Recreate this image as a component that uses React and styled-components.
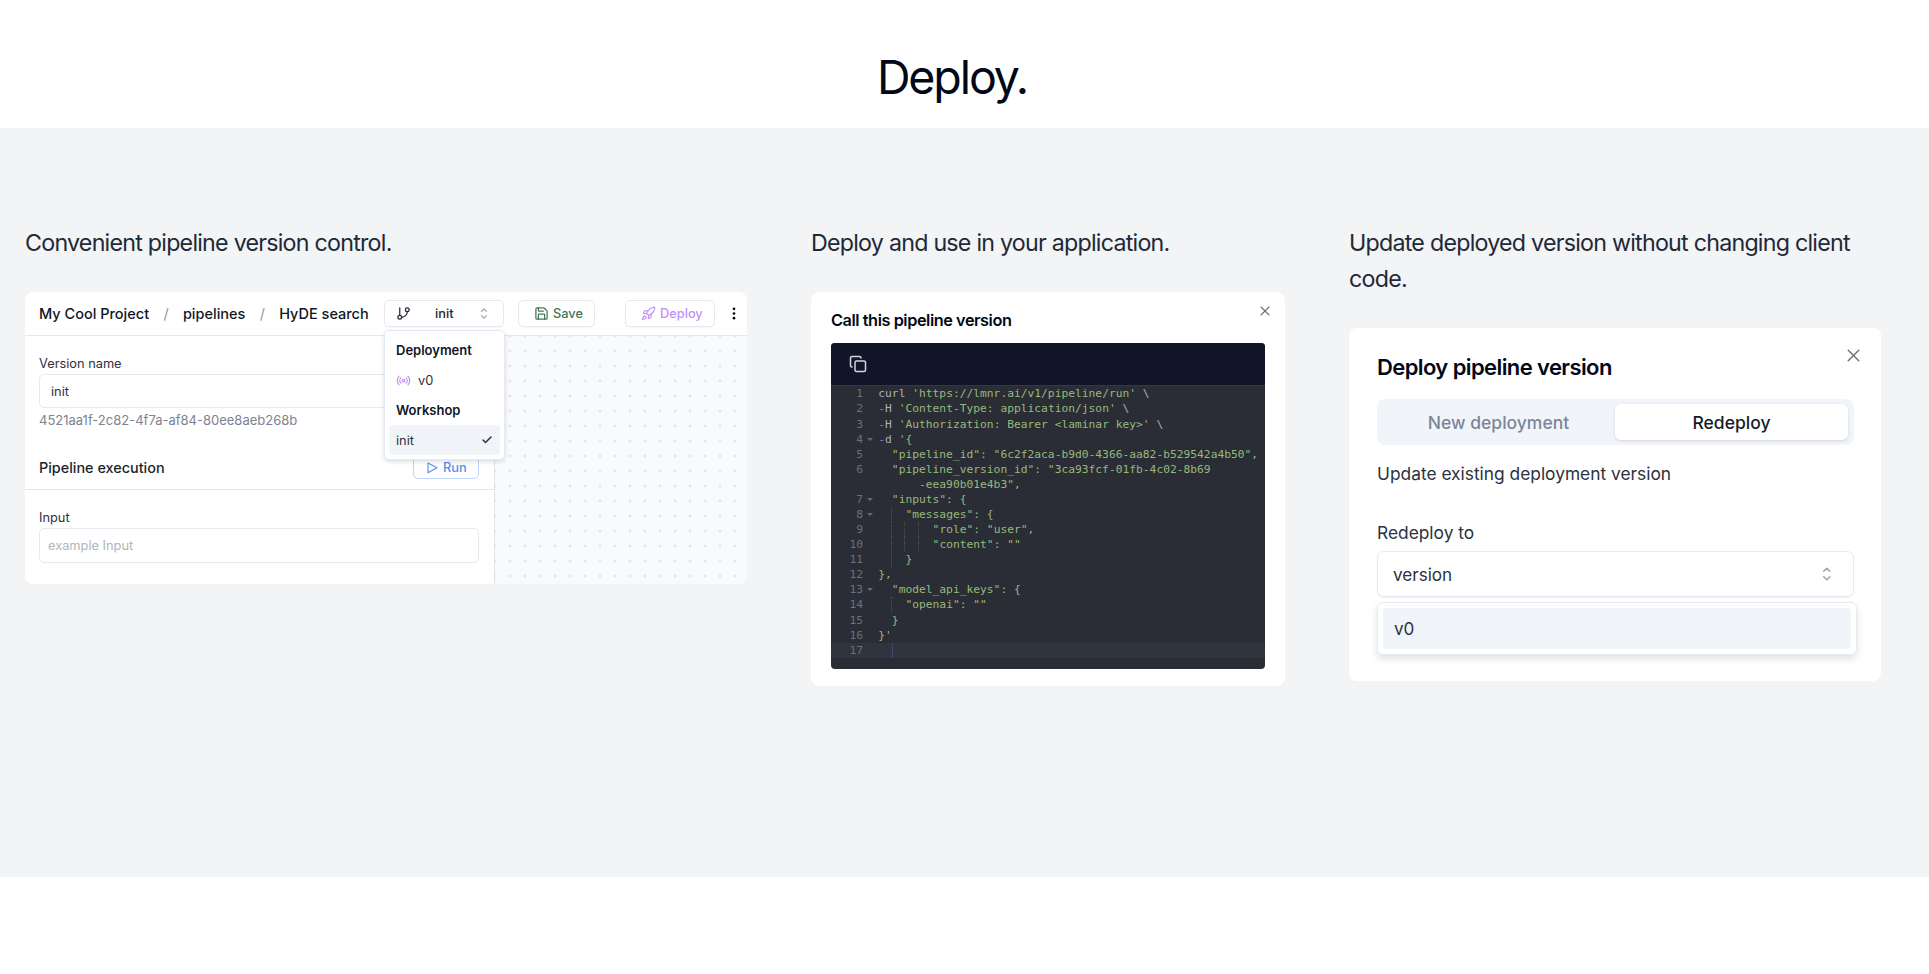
import React from "react";
import styled, { createGlobalStyle } from "styled-components";
import { GitBranch, Save, Rocket, Radio, Copy, Check, X } from "lucide-react";

const colors = {
  text: "#020817",
  heading: "#1f2937",
  body: "#2b3240",
  muted: "#7d8390",
  placeholder: "#b0b5be",
  border: "#e5e9f0",
  line: "#e4e6ea",
  section: "#f2f4f6",
  accent: "#f1f5f9",
  green: "#447556",
  purple: "#c58ffb",
  blue: "#5b8bf0",
  codeHeader: "#101628",
  code: "#2a2d35",
  codeActive: "#2f343d",
  codeString: "#98b97b",
  codeText: "#a9b0bc",
  codeDash: "#b06cc2",
  gutter: "#6a707c",
};

const GlobalStyle = createGlobalStyle`
* { box-sizing: border-box; }
body {
  margin: 0;
  background: #fff;
  color: ${colors.text};
  font-family: Inter, "Liberation Sans", sans-serif;
}
svg { display: block; flex-shrink: 0; }
`;

const CaretSort = ({ size = 15 }) => (
  <svg width={size * 0.6} height={size} viewBox="0 0 9 15" fill="none" stroke="#9a9ea6" strokeWidth="1.3" strokeLinecap="round" strokeLinejoin="round">
    <path d="M1.6 5 4.5 2.1 7.4 5M1.6 10 4.5 12.9 7.4 10" />
  </svg>
);

const PlayIcon = () => (
  <svg width="11" height="12" viewBox="0 0 11 12" fill="none" stroke="currentColor" strokeWidth="1.1" strokeLinejoin="round">
    <path d="M1 1 10 5.8 1 10.8Z" />
  </svg>
);

const DotsIcon = () => (
  <svg width="4" height="13" viewBox="0 0 4 13" fill={colors.text}>
    <circle cx="2" cy="1.8" r="1.35" />
    <circle cx="2" cy="6.5" r="1.35" />
    <circle cx="2" cy="11.2" r="1.35" />
  </svg>
);

const PageHeader = styled.header`
height:128px;
width:1904px;
padding-top:53px;
`;
const PageTitle = styled.h1`
margin:0;
text-align:center;
font-size:46.5px;
font-weight:400;
line-height:48px;
letter-spacing:-2.1px;
`;
const Section = styled.section`
display:grid;
grid-template-columns:722px 474px 532px;
column-gap:64px;
align-items:start;
height:749px;
padding:97px 0 0 25px;
background:${colors.section};
`;
const Caption = styled.p`
margin:0 0 31px;
font-size:23.25px;
line-height:36px;
letter-spacing:-0.77px;
color:${colors.heading};
`;
const Card = styled.div`
display:flex;
flex-direction:column;
height:${(props) => props.$height}px;
padding:${(props) => props.$padding || "0"};
border-radius:8px;
background:#fff;
`;

/* version control card */
const Toolbar = styled.div`
display:flex;
align-items:center;
height:44px;
padding-left:14px;
border-bottom:1px solid ${colors.line};
`;
const Crumb = styled.span`
margin-right:14.3px;
font-size:14.5px;
font-weight:${(props) => (props.$slash ? 400 : 500)};
color:${(props) => (props.$slash ? "#9298a3" : "#111624")};
`;
const SelectWrapper = styled.div`
position:relative;
margin:0 14px 0 auto;
`;
const ToolButton = styled.div`
display:flex;
align-items:center;
width:${(props) => props.$width}px;
height:27px;
padding-left:${(props) => props.$left}px;
gap:${(props) => props.$gap || 4}px;
border:1px solid ${colors.border};
border-radius:5px;
background:#fff;
box-shadow:0 1px 1px rgba(15,23,42,.03);
font-size:12.8px;
font-weight:500;
color:${(props) => props.$color || "#222733"};
`;
const Actions = styled.div`
display:flex;
align-items:center;
width:229px;
`;
const DeployButton = styled(ToolButton)`
margin-left:30px;
`;
const MoreButton = styled.div`
margin-left:17px;
`;
const Menu = styled.div`
position:absolute;
top:30px;
left:0;
z-index:2;
width:121px;
padding:4px;
border:1px solid ${colors.border};
border-radius:5px;
background:#fff;
box-shadow:0 2px 4px rgba(15,23,42,.14);
`;
const MenuItem = styled.div`
display:flex;
align-items:center;
height:30px;
padding:0 7px 0 7px;
gap:7px;
border-radius:4px;
background:${(props) => (props.$active ? colors.accent : "transparent")};
font-size:${(props) => (props.$label ? 13 : 12.8)}px;
font-weight:${(props) => (props.$label ? 600 : 400)};
color:${(props) => (props.$label ? "#111624" : colors.body)};
`;
const ItemText = styled.span`
flex:${(props) => (props.$grow ? 1 : "none")};
`;
const Workspace = styled.div`
display:flex;
flex:1;
`;
const SidePanel = styled.div`
width:470px;
border-right:1px solid #e0e3e8;
`;
const FieldGroup = styled.div`
padding:${(props) => props.$top}px 15px 0 14px;
`;
const FieldLabel = styled.div`
font-size:12.8px;
line-height:18px;
color:${colors.body};
`;
const FieldInput = styled.div`
display:flex;
align-items:center;
height:${(props) => props.$height}px;
margin-top:${(props) => props.$top}px;
padding-left:${(props) => props.$left}px;
border:1px solid ${colors.border};
border-radius:5px;
font-size:12.8px;
color:${(props) => (props.$placeholder ? colors.placeholder : colors.body)};
`;
const VersionId = styled.div`
margin-top:3px;
font-size:13px;
line-height:18px;
color:${colors.muted};
`;
const ExecutionRow = styled.div`
display:flex;
align-items:center;
justify-content:space-between;
height:44px;
margin-top:17px;
padding:0 15px 0 14px;
border-bottom:1px solid ${colors.line};
font-size:14.4px;
font-weight:500;
color:#1a1f2c;
`;
const RunButton = styled.div`
display:flex;
align-items:center;
width:66px;
height:23px;
padding-left:13px;
gap:5px;
border:1px solid #bdd3fb;
border-radius:5px;
font-size:12.8px;
font-weight:500;
color:${colors.blue};
`;
const Canvas = styled.div`
flex:1;
border-bottom-right-radius:8px;
background-color:#f9fafb;
background-image:radial-gradient(circle at 7.5px 7.5px, #d9dce1 0.9px, transparent 1.4px);
background-size:15px 15px;
background-position:7.5px 7.5px;
`;

const Breadcrumbs = () => (
  <>
    <Crumb>My Cool Project</Crumb>
    <Crumb $slash>/</Crumb>
    <Crumb>pipelines</Crumb>
    <Crumb $slash>/</Crumb>
    <Crumb>HyDE search</Crumb>
  </>
);

const SelectContent = styled.div`
display:flex;
flex:1;
align-items:center;
justify-content:space-between;
padding:0 15px 0 23px;
`;

const VersionSelect = () => (
  <SelectWrapper>
    <ToolButton $width={120} $left={11} $gap={1}>
      <GitBranch size={15} strokeWidth={2} />
      <SelectContent>
        <span>init</span>
        <CaretSort size={13} />
      </SelectContent>
    </ToolButton>
    <Menu>
      <MenuItem $label>Deployment</MenuItem>
      <MenuItem>
        <Radio size={15} color={colors.purple} strokeWidth={2} />
        <ItemText>v0</ItemText>
      </MenuItem>
      <MenuItem $label>Workshop</MenuItem>
      <MenuItem $active>
        <ItemText $grow>init</ItemText>
        <Check size={12} strokeWidth={3} />
      </MenuItem>
    </Menu>
  </SelectWrapper>
);

const VersionControl = () => (
  <Card $height={292}>
    <Toolbar>
      <Breadcrumbs />
      <VersionSelect />
      <Actions>
        <ToolButton $width={77} $left={15} $color={colors.green}>
          <Save size={15} strokeWidth={2} />
          Save
        </ToolButton>
        <DeployButton $width={90} $left={15} $color={colors.purple}>
          <Rocket size={15} strokeWidth={1.9} />
          Deploy
        </DeployButton>
        <MoreButton>
          <DotsIcon />
        </MoreButton>
      </Actions>
    </Toolbar>
    <Workspace>
      <SidePanel>
        <FieldGroup $top={19}>
          <FieldLabel>Version name</FieldLabel>
          <FieldInput $height={34} $top={1} $left={11}>init</FieldInput>
          <VersionId>4521aa1f-2c82-4f7a-af84-80ee8aeb268b</VersionId>
        </FieldGroup>
        <ExecutionRow>
          Pipeline execution
          <RunButton>
            <PlayIcon />
            Run
          </RunButton>
        </ExecutionRow>
        <FieldGroup $top={19}>
          <FieldLabel>Input</FieldLabel>
          <FieldInput $height={35} $top={1} $left={8} $placeholder>example Input</FieldInput>
        </FieldGroup>
      </SidePanel>
      <Canvas />
    </Workspace>
  </Card>
);

/* code card */
const CardHeader = styled.div`
display:flex;
justify-content:space-between;
align-items:flex-start;
`;
const CodeTitle = styled.h2`
margin:0 0 13px;
font-size:16.3px;
font-weight:600;
line-height:20px;
letter-spacing:-0.44px;
`;
const CodeClose = styled.div`
margin:-7px -8px 0 0;
color:#6b7078;
`;
const CodeBox = styled.div`
display:flex;
flex-direction:column;
height:325.5px;
border-radius:4px;
overflow:hidden;
background:${colors.code};
font-family:"DejaVu Sans Mono", "Liberation Mono", monospace;
font-size:11.27px;
`;
const CodeToolbar = styled.div`
display:flex;
align-items:center;
flex-shrink:0;
height:43.4px;
padding-left:18px;
border-bottom:1px solid #343844;
background:${colors.codeHeader};
color:#d3d5da;
`;
const CodeRow = styled.div`
display:flex;
height:15.08px;
line-height:15.08px;
background:${(props) => (props.$active ? colors.codeActive : "transparent")};
white-space:pre;
`;
const LineNumber = styled.span`
width:32px;
text-align:right;
color:${colors.gutter};
`;
const Fold = styled.span`
display:flex;
align-items:center;
justify-content:center;
width:15.3px;
padding-right:2px;
`;
const FoldArrow = styled.i`
border:3px solid transparent;
border-top:3px solid #656a75;
border-bottom:0;
`;
const Guide = styled.span`
border-left:1px dotted #50544f;
margin-left:-1px;
`;
const Token = styled.span`
color:${(props) => props.$color};
`;
const Cursor = styled.span`
width:1px;
background:#3d4a73;
`;

// each token is [type, text]; "g" tokens start at a dotted indent guide
const codeLines = [
  { n: 1, tokens: [["t", "curl "], ["s", "'https://lmnr.ai/v1/pipeline/run'"], ["t", " \\"]] },
  { n: 2, tokens: [["d", "-"], ["t", "H "], ["s", "'Content-Type: application/json'"], ["t", " \\"]] },
  { n: 3, tokens: [["d", "-"], ["t", "H "], ["s", "'Authorization: Bearer <laminar key>'"], ["t", " \\"]] },
  { n: 4, fold: true, tokens: [["d", "-"], ["t", "d "], ["s", "'{"]] },
  { n: 5, tokens: [["s", '  "pipeline_id": "6c2f2aca-b9d0-4366-aa82-b529542a4b50",']] },
  { n: 6, tokens: [["s", '  "pipeline_version_id": "3ca93fcf-01fb-4c02-8b69']] },
  { n: "", tokens: [["s", '      -eea90b01e4b3",']] },
  { n: 7, fold: true, tokens: [["s", '  "inputs": {']] },
  { n: 8, fold: true, tokens: [["s", "  "], ["g", '  "messages": {']] },
  { n: 9, tokens: [["s", "  "], ["g", "  "], ["g", "  "], ["g", '  "role": "user",']] },
  { n: 10, tokens: [["s", "  "], ["g", "  "], ["g", "  "], ["g", '  "content": ""']] },
  { n: 11, tokens: [["s", "  "], ["g", "  }"]] },
  { n: 12, tokens: [["s", "},"]] },
  { n: 13, fold: true, tokens: [["s", '  "model_api_keys": {']] },
  { n: 14, tokens: [["s", "  "], ["g", '  "openai": ""']] },
  { n: 15, tokens: [["s", "  }"]] },
  { n: 16, tokens: [["s", "}'"]] },
  { n: 17, active: true, tokens: [["s", "  "]] },
];

const tokenColors = { t: colors.codeText, d: colors.codeDash, s: colors.codeString, g: colors.codeString };

const CodeLine = ({ line }) => (
  <CodeRow $active={line.active}>
    <LineNumber>{line.n}</LineNumber>
    <Fold>{line.fold && <FoldArrow />}</Fold>
    {line.tokens.map(([type, text], i) => {
      const token = <Token key={i} $color={tokenColors[type]}>{text}</Token>;
      return type === "g" ? <Guide key={i}>{token}</Guide> : token;
    })}
    {line.active && <Cursor />}
  </CodeRow>
);

const CallPipeline = () => (
  <Card $height={394} $padding="18px 20px 0">
    <CardHeader>
      <CodeTitle>Call this pipeline version</CodeTitle>
      <CodeClose>
        <X size={16} strokeWidth={1.6} />
      </CodeClose>
    </CardHeader>
    <CodeBox>
      <CodeToolbar>
        <Copy size={18} strokeWidth={2} />
      </CodeToolbar>
      {codeLines.map((line, i) => (
        <CodeLine key={i} line={line} />
      ))}
    </CodeBox>
  </Card>
);

/* redeploy card */
const DialogTitle = styled.h2`
margin:0 0 18px;
font-size:22px;
font-weight:600;
line-height:28px;
letter-spacing:-0.6px;
`;
const DialogClose = styled.div`
margin:-8px -10px 0 0;
color:#6b7078;
`;
const Tabs = styled.div`
display:flex;
height:46px;
padding:5px 6px 5px 5px;
border-radius:8px;
background:${colors.accent};
`;
const Tab = styled.div`
display:flex;
align-items:center;
justify-content:center;
flex:1;
height:36px;
border-radius:6px;
background:${(props) => (props.$active ? "#fff" : "transparent")};
box-shadow:${(props) => (props.$active ? "0 1px 3px rgba(15,23,42,.14)" : "none")};
font-size:17.5px;
font-weight:500;
color:${(props) => (props.$active ? "#161b29" : "#7a8699")};
`;
const DialogText = styled.div`
margin-top:${(props) => props.$top}px;
font-size:17.35px;
line-height:24px;
color:${colors.body};
`;
const Select = styled.div`
display:flex;
align-items:center;
justify-content:space-between;
height:46px;
margin-top:6px;
padding:0 21px 0 15px;
border:1px solid ${colors.border};
border-radius:7px;
box-shadow:0 1px 2px rgba(15,23,42,.06);
font-size:17.1px;
color:${colors.body};
`;
const Options = styled.div`
width:480px;
height:53px;
margin-top:5px;
padding:5px;
border:1px solid ${colors.border};
border-radius:6px;
box-shadow:0 4px 7px rgba(15,23,42,.13);
`;
const Option = styled.div`
display:flex;
align-items:center;
height:41px;
padding-left:11px;
border-radius:4px;
background:${colors.accent};
font-size:17.1px;
color:${colors.body};
`;

const Redeploy = () => (
  <Card $height={353} $padding="25px 27px 0 28px">
    <CardHeader>
      <DialogTitle>Deploy pipeline version</DialogTitle>
      <DialogClose>
        <X size={21} strokeWidth={1.7} />
      </DialogClose>
    </CardHeader>
    <Tabs>
      <Tab>New deployment</Tab>
      <Tab $active>Redeploy</Tab>
    </Tabs>
    <DialogText $top={17}>Update existing deployment version</DialogText>
    <DialogText $top={35}>Redeploy to</DialogText>
    <Select>
      version
      <CaretSort size={16} />
    </Select>
    <Options>
      <Option>v0</Option>
    </Options>
  </Card>
);

const App = () => {
  return (
    <>
      <GlobalStyle />
      <PageHeader>
        <PageTitle>Deploy.</PageTitle>
      </PageHeader>
      <Section>
        <div>
          <Caption>Convenient pipeline version control.</Caption>
          <VersionControl />
        </div>
        <div>
          <Caption>Deploy and use in your application.</Caption>
          <CallPipeline />
        </div>
        <div>
          <Caption>Update deployed version without changing client code.</Caption>
          <Redeploy />
        </div>
      </Section>
    </>
  );
};

export default App;
